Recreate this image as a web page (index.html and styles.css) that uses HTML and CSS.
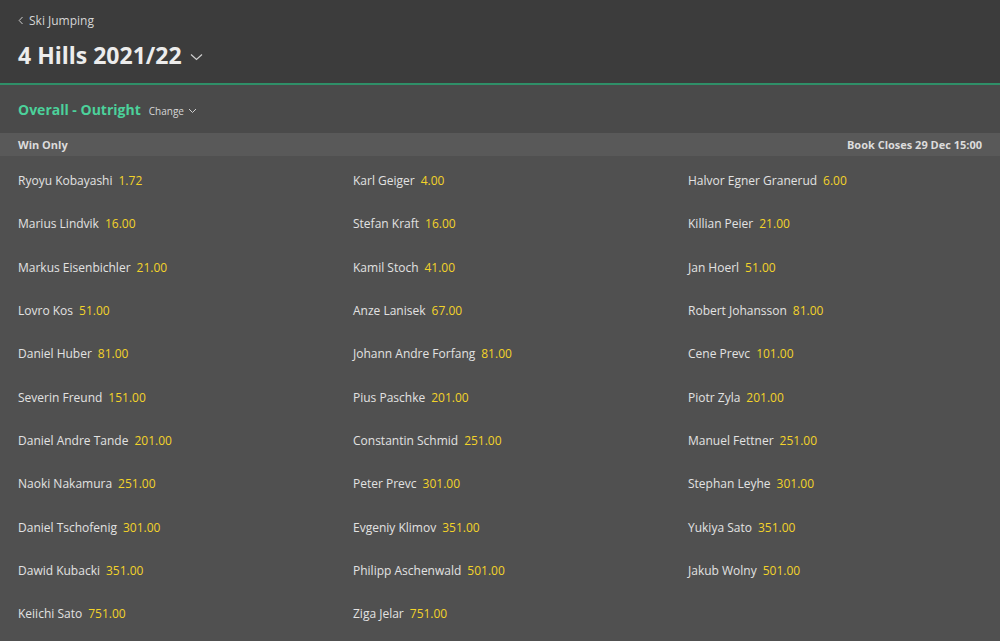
FILE: index.html
```html
<!DOCTYPE html>
<html lang="en">
<head>
  <meta charset="UTF-8" />
  <title>4 Hills 2021/22</title>
  <link rel="stylesheet" href="styles.css">
</head>
<body>
  <div class="kopf">
    <a class="zurueck" href="#">
      <svg width="6" height="9" viewBox="0 0 6 9"><path d="M4.5 1 L1.2 4.5 L4.5 8" fill="none" stroke="#cfcfcf" stroke-width="1"/></svg>
      Ski Jumping
    </a>
    <div class="titel">
      <h1>4 Hills 2021/22</h1>
      <svg width="13" height="8" viewBox="0 0 13 8"><path d="M1 1.5 L6.5 6.5 L12 1.5" fill="none" stroke="#cfcfcf" stroke-width="1.2"/></svg>
    </div>
  </div>

  <div class="markt">
    <span class="markt-name">Overall - Outright</span>
    <span class="wechseln">Change
      <svg width="9" height="6" viewBox="0 0 9 6"><path d="M1 1 L4.5 4.5 L8 1" fill="none" stroke="#cfcfcf" stroke-width="1"/></svg>
    </span>
  </div>

  <div class="band">
    <span>Win Only</span>
    <span>Book Closes 29 Dec 15:00</span>
  </div>

  <div class="liste">
    <div class="zeile"><span class="name">Ryoyu Kobayashi</span><span class="quote">1.72</span></div>
    <div class="zeile"><span class="name">Karl Geiger</span><span class="quote">4.00</span></div>
    <div class="zeile"><span class="name">Halvor Egner Granerud</span><span class="quote">6.00</span></div>
    <div class="zeile"><span class="name">Marius Lindvik</span><span class="quote">16.00</span></div>
    <div class="zeile"><span class="name">Stefan Kraft</span><span class="quote">16.00</span></div>
    <div class="zeile"><span class="name">Killian Peier</span><span class="quote">21.00</span></div>
    <div class="zeile"><span class="name">Markus Eisenbichler</span><span class="quote">21.00</span></div>
    <div class="zeile"><span class="name">Kamil Stoch</span><span class="quote">41.00</span></div>
    <div class="zeile"><span class="name">Jan Hoerl</span><span class="quote">51.00</span></div>
    <div class="zeile"><span class="name">Lovro Kos</span><span class="quote">51.00</span></div>
    <div class="zeile"><span class="name">Anze Lanisek</span><span class="quote">67.00</span></div>
    <div class="zeile"><span class="name">Robert Johansson</span><span class="quote">81.00</span></div>
    <div class="zeile"><span class="name">Daniel Huber</span><span class="quote">81.00</span></div>
    <div class="zeile"><span class="name">Johann Andre Forfang</span><span class="quote">81.00</span></div>
    <div class="zeile"><span class="name">Cene Prevc</span><span class="quote">101.00</span></div>
    <div class="zeile"><span class="name">Severin Freund</span><span class="quote">151.00</span></div>
    <div class="zeile"><span class="name">Pius Paschke</span><span class="quote">201.00</span></div>
    <div class="zeile"><span class="name">Piotr Zyla</span><span class="quote">201.00</span></div>
    <div class="zeile"><span class="name">Daniel Andre Tande</span><span class="quote">201.00</span></div>
    <div class="zeile"><span class="name">Constantin Schmid</span><span class="quote">251.00</span></div>
    <div class="zeile"><span class="name">Manuel Fettner</span><span class="quote">251.00</span></div>
    <div class="zeile"><span class="name">Naoki Nakamura</span><span class="quote">251.00</span></div>
    <div class="zeile"><span class="name">Peter Prevc</span><span class="quote">301.00</span></div>
    <div class="zeile"><span class="name">Stephan Leyhe</span><span class="quote">301.00</span></div>
    <div class="zeile"><span class="name">Daniel Tschofenig</span><span class="quote">301.00</span></div>
    <div class="zeile"><span class="name">Evgeniy Klimov</span><span class="quote">351.00</span></div>
    <div class="zeile"><span class="name">Yukiya Sato</span><span class="quote">351.00</span></div>
    <div class="zeile"><span class="name">Dawid Kubacki</span><span class="quote">351.00</span></div>
    <div class="zeile"><span class="name">Philipp Aschenwald</span><span class="quote">501.00</span></div>
    <div class="zeile"><span class="name">Jakub Wolny</span><span class="quote">501.00</span></div>
    <div class="zeile"><span class="name">Keiichi Sato</span><span class="quote">751.00</span></div>
    <div class="zeile"><span class="name">Ziga Jelar</span><span class="quote">751.00</span></div>
  </div>
</body>
</html>
```

FILE: styles.css
```css
body {
  margin: 0;
  font-family: "Open Sans", "Noto Sans", sans-serif;
  background: #505050;
  color: #e4e4e4;
  overflow: hidden;
}

.kopf {
  background: #3c3c3c;
  padding: 12px 18px 0;
  height: 71px;
  border-bottom: 2px solid #2f8f68;
}

.zurueck {
  display: flex;
  align-items: center;
  gap: 5px;
  color: #d6d6d6;
  text-decoration: none;
  font-size: 12px;
  height: 16px;
}

.titel {
  display: flex;
  align-items: center;
  gap: 8px;
  margin-top: 10px;
}

.titel h1 {
  margin: 0;
  font-size: 23px;
  font-weight: bold;
  color: #ececec;
  line-height: 34px;
}

.titel svg {
  margin-top: 4px;
}

.markt {
  background: #4a4a4a;
  height: 48px;
  display: flex;
  align-items: center;
  padding: 0 18px;
  gap: 8px;
}

.markt-name {
  color: #4cd19b;
  font-size: 14px;
  font-weight: bold;
}

.wechseln {
  color: #d6d6d6;
  font-size: 10px;
  display: flex;
  align-items: center;
  gap: 4px;
  margin-top: 3px;
}

.band {
  background: #595959;
  height: 23px;
  display: flex;
  justify-content: space-between;
  align-items: center;
  padding: 0 18px;
  font-size: 11px;
  font-weight: bold;
  color: #dcdcdc;
}

.liste {
  display: grid;
  grid-template-columns: 335px 335px 1fr;
  grid-auto-rows: 43.3px;
  padding: 3px 18px 0;
}

.zeile {
  display: flex;
  align-items: center;
  gap: 6px;
  font-size: 12px;
}

.name {
  color: #e2e2e2;
}

.quote {
  color: #f3d329;
}
```
